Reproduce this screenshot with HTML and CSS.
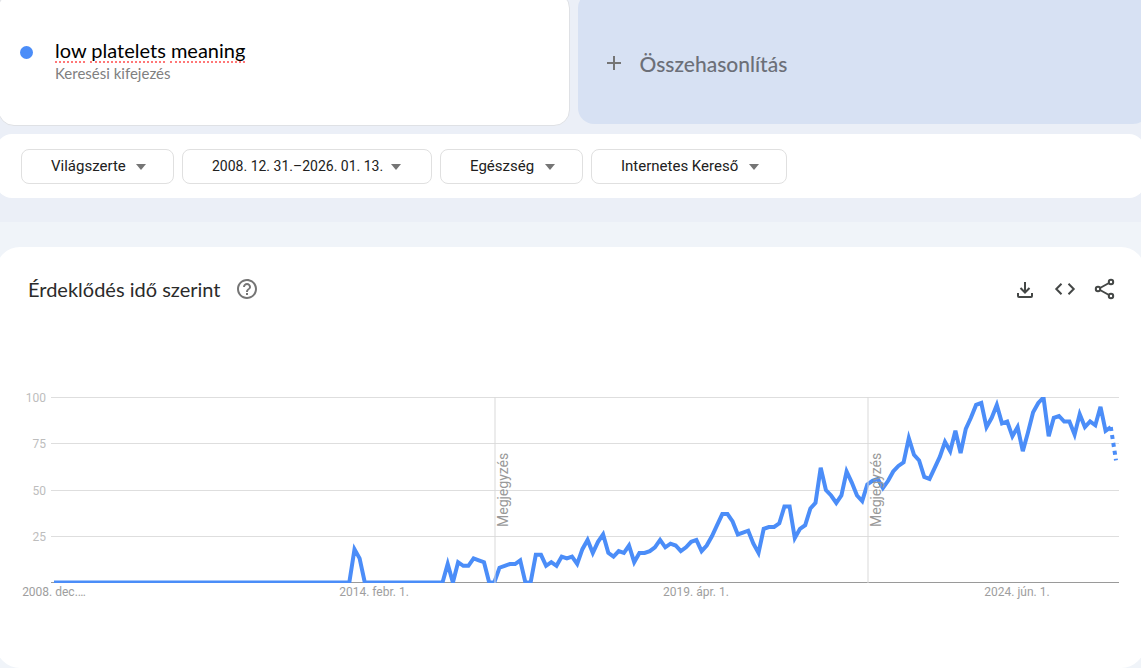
FILE: index.html
```html
<!DOCTYPE html>
<html lang="hu">
<head>
  <meta charset="UTF-8" />
  <meta name="viewport" content="width=device-width, initial-scale=1" />
  <title>low platelets meaning - Trends</title>
  <link rel="stylesheet" href="styles.css">
</head>
<body>
  <header class="explore-header">
    <div class="terms">
      <div class="term-card">
        <span class="term-dot"></span>
        <div class="term-body">
          <div class="term-field">
            <input type="text" class="term-input" aria-label="Keresési kifejezés" value="low platelets meaning" spellcheck="false" />
            <div class="spelling" aria-hidden="true">
              <i class="w-short"></i><i class="w-long"></i><i class="w-long"></i>
            </div>
          </div>
          <div class="term-type">Keresési kifejezés</div>
        </div>
      </div>
      <button type="button" class="compare">
        <svg width="14" height="14" viewBox="0 0 14 14" aria-hidden="true"><path d="M7 0v14M0 7h14" stroke="#757575" stroke-width="2"/></svg>
        <span>Összehasonlítás</span>
      </button>
    </div>

    <div class="filters">
      <div class="filter"><select aria-label="Hely"><option>Világszerte</option></select></div>
      <div class="filter dates"><select aria-label="Időszak"><option>2008. 12. 31.–2026. 01. 13.</option></select></div>
      <div class="filter"><select aria-label="Kategória"><option>Egészség</option></select></div>
      <div class="filter"><select aria-label="Keresés típusa"><option>Internetes Kereső</option></select></div>
    </div>
  </header>

  <main class="widget">
    <div class="widget-head">
      <h1>Érdeklődés idő szerint</h1>
      <button type="button" class="icon-btn help" aria-label="Súgó">
        <svg width="24" height="24" viewBox="0 0 24 24" fill="#757575"><path d="M11 18h2v-2h-2v2zm1-16C6.480 2 2 6.480 2 12s4.480 10 10 10 10-4.480 10-10S17.520 2 12 2zm0 18c-4.410 0-8-3.590-8-8s3.590-8 8-8 8 3.590 8 8-3.590 8-8 8zm0-14c-2.210 0-4 1.790-4 4h2c0-1.100.9-2 2-2s2 .9 2 2c0 2-3 1.750-3 5h2c0-2.250 3-2.500 3-5 0-2.210-1.790-4-4-4z"/></svg>
      </button>
      <div class="actions">
        <button type="button" class="icon-btn" aria-label="Letöltés">
          <svg width="24" height="24" viewBox="0 0 24 24" fill="none" stroke="#444746" stroke-width="2"><path d="M12 5v10M7.500 11l4.500 4.500 4.500-4.500M5 16v3q0 1 1 1h12q1 0 1-1v-3"/></svg>
        </button>
        <button type="button" class="icon-btn" aria-label="Beágyazás">
          <svg width="24" height="24" viewBox="0 0 24 24" fill="none" stroke="#444746" stroke-width="2"><path d="M8.500 6.800L3.300 12l5.200 5.200M15.500 6.800l5.200 5.200-5.200 5.200"/></svg>
        </button>
        <button type="button" class="icon-btn" aria-label="Megosztás">
          <svg width="24" height="24" viewBox="0 0 24 24" fill="none" stroke="#444746" stroke-width="2"><circle cx="5" cy="12" r="2.200"/><circle cx="18" cy="5" r="2.200"/><circle cx="18" cy="19" r="2.200"/><path d="M7 11l9-5M7 13l9 5"/></svg>
        </button>
      </div>
    </div>

    <svg class="chart" viewBox="0 0 1141 240" role="img" aria-label="Érdeklődés idő szerint">
      <defs>
        <clipPath id="plot"><rect x="51" y="27" width="1068" height="186"/></clipPath>
      </defs>
      <g class="grid">
        <path d="M51 27.500h1068M51 73.500h1068M51 120.500h1068M51 166.500h1068"/>
        <path class="axis" d="M51 212.500h1068"/>
      </g>
      <g class="y-labels">
        <text x="46" y="32">100</text>
        <text x="46" y="78">75</text>
        <text x="46" y="125">50</text>
        <text x="46" y="171">25</text>
      </g>
      <g clip-path="url(#plot)">
        <path class="series" id="series"/>
        <path class="series partial" id="partial"/>
      </g>
      <g class="notes">
        <path d="M495 27v186M868 27v186"/>
        <text transform="translate(508 157) rotate(-90)">Megjegyzés</text>
        <text transform="translate(881 157) rotate(-90)">Megjegyzés</text>
      </g>
      <g class="x-labels">
        <text x="54" y="226">2008. dec.…</text>
        <text x="374" y="226">2014. febr. 1.</text>
        <text x="696" y="226">2019. ápr. 1.</text>
        <text x="1017" y="226">2024. jún. 1.</text>
      </g>
    </svg>
  </main>

  <script>
    // monthly values, 2008-12 -> 2026-01 (the last month is partial)
    const values = new Array(58).fill(0).concat(
      [18, 13], new Array(16).fill(0),
      [10, 0, 11, 9, 9, 13, 12, 11, 0, 0, 8, 9, 10, 10, 12, 0, 0, 15, 15, 9,
       11, 9, 14, 13, 14, 10, 18, 23, 16, 22, 26, 16, 14, 17, 16, 20, 11, 16, 16, 17,
       19, 23, 19, 21, 20, 17, 19, 22, 23, 17, 20, 25, 31, 37, 37, 33, 26, 27, 28, 21,
       16, 29, 30, 30, 32, 41, 41, 24, 29, 31, 40, 43, 62, 50, 47, 43, 47, 60, 54, 47,
       44, 53, 55, 56, 51, 55, 60, 63, 65, 78, 69, 66, 57, 56, 62, 68, 76, 71, 82, 70,
       83, 89, 96, 97, 84, 89, 96, 86, 87, 79, 84, 71, 81, 92, 97, 100, 79, 89, 90, 87,
       87, 80, 91, 84, 87, 85, 95, 82, 84, 66]
    );
    const step = (1116 - 54) / (values.length - 1);
    const points = values.map((v, i) =>
      `${(54 + i * step).toFixed(1)} ${(212.5 - v * 1.85).toFixed(1)}`);

    document.getElementById('series').setAttribute('d', 'M' + points.slice(0, -1).join('L'));
    document.getElementById('partial').setAttribute('d', 'M' + points.slice(-2).join('L'));
  </script>
</body>
</html>
```
FILE: styles.css
```css
* {
  box-sizing: border-box;
}
body {
  margin: 0;
  background-color: #f0f4f9;
  font-family: Lato, 'Open Sans', sans-serif;
  color: #1f1f1f;
  overflow: hidden;
}
button, input, select {
  font-family: inherit;
}
.explore-header {
  display: flex;
  flex-direction: column;
  gap: 8px;
  padding-bottom: 24px;
  background-color: #ebeff7;
  overflow: hidden;
}
.terms {
  display: grid;
  grid-template-columns: 1fr 1fr;
  align-items: start;
  gap: 8px;
  margin: -8px -8px 0 -2px;
}
.term-card {
  display: flex;
  align-items: center;
  gap: 22px;
  height: 134px;
  padding: 4px 21px 0;
  background-color: #fff;
  border: 1px solid #dfe1e5;
  border-radius: 16px;
}
.term-dot {
  width: 13px;
  height: 13px;
  margin-bottom: 18px;
  border-radius: 50%;
  background-color: #4b8df8;
}
.term-body {
  flex: 1;
}
.term-field {
  position: relative;
}
.term-input {
  display: block;
  width: 100%;
  height: 24px;
  padding: 0 0 2px;
  border: none;
  outline: none;
  background: none;
  font-size: 20px;
  color: #000;
}
.spelling {
  position: absolute;
  left: 0;
  bottom: 0;
  display: flex;
  gap: 5px;
  pointer-events: none;
}
.spelling i {
  border-bottom: 2px dotted #f77;
}
.w-short {
  width: 30px;
}
.w-long {
  width: 75px;
}
.term-type {
  font-size: 15px;
  line-height: 20px;
  color: #808080;
}
.compare {
  display: flex;
  align-items: center;
  gap: 19px;
  height: 132px;
  padding: 10px 29px 0;
  border: none;
  border-radius: 16px;
  background-color: #d7e1f3;
  font-size: 21px;
  font-weight: 500;
  color: #6c6f78;
}
.filters {
  display: flex;
  align-items: center;
  gap: 8px;
  height: 64px;
  margin: 0 -4px;
  padding: 0 25px;
  background-color: #fff;
  border-radius: 16px;
}
.filter {
  position: relative;
}
.filter::after {
  content: '';
  position: absolute;
  right: 28px;
  top: 15px;
  border: 5px solid transparent;
  border-top: 6px solid #757575;
  border-bottom: none;
  pointer-events: none;
}
.filter select {
  appearance: none;
  display: block;
  height: 35px;
  padding: 0 47px 0 29px;
  border: 1px solid #e0e0e0;
  border-radius: 8px;
  background-color: #fff;
  font-family: Roboto, sans-serif;
  font-size: 15px;
  color: #212121;
}
.dates select {
  font-size: 14px;
}
.dates::after {
  right: 31px;
}
.widget {
  margin: 25px -4px 0;
  padding: 0 4px 58px;
  background-color: #fff;
  border-radius: 24px;
}
.widget-head {
  display: flex;
  align-items: center;
  height: 84px;
  padding: 0 24px 0 28px;
}
h1 {
  margin: 0;
  font-size: 20px;
  font-weight: 400;
  color: #2b2b2b;
}
.icon-btn {
  display: flex;
  padding: 0;
  border: none;
  background: none;
  cursor: pointer;
}
.help {
  margin-left: 15px;
}
.actions {
  display: flex;
  gap: 16px;
  margin-left: auto;
}
.chart {
  display: block;
  width: 100%;
  margin-top: 39px;
  font-family: Roboto, sans-serif;
  font-size: 12px;
}
.grid path {
  stroke: #dedede;
}
.grid .axis {
  stroke: #9a9a9a;
}
.y-labels {
  fill: #bdbdbd;
  text-anchor: end;
}
.x-labels {
  fill: #9e9e9e;
  text-anchor: middle;
}
.series {
  fill: none;
  stroke: #4b8df8;
  stroke-width: 4;
}
.partial {
  stroke-dasharray: 4 4;
}
.notes path {
  stroke: #d9d9d9;
  stroke-width: 1;
}
.notes text {
  fill: #999;
  font-size: 14px;
}
```
